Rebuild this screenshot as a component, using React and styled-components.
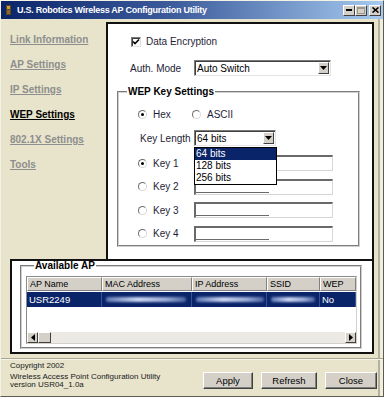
import React from 'react'
import styled, { createGlobalStyle, css } from 'styled-components'

const GlobalStyle = createGlobalStyle`
  html, body { margin: 0; padding: 0; background: #e7e4cb; }
  body { font-family: "Liberation Sans", Arial, sans-serif; }
  * { box-sizing: border-box; }
`

const NAV = ['Link Information', 'AP Settings', 'IP Settings', 'WEP Settings', '802.1X Settings', 'Tools']
const COLS = ['AP Name', 'MAC Address', 'IP Address', 'SSID', 'WEP']

export default function App() {
    return (
        <>
            <GlobalStyle />
            <Window>
                <TitleBar>
                    <AppIcon />
                    <TitleText>U.S. Robotics Wireless AP Configuration Utility</TitleText>
                    <CapButtons>
                        <CapButton><svg width="6" height="2"><rect width="6" height="2" fill="#000" /></svg></CapButton>
                        <CapButton $off>
                            <svg width="8" height="7"><rect x="0.5" y="0.5" width="7" height="6" fill="none" stroke="#9a978c" /><rect x="0" y="0" width="8" height="2" fill="#9a978c" /></svg>
                        </CapButton>
                        <CapButton $gap>
                            <svg width="7" height="6"><path d="M0.5 0.5 L6.5 5.5 M6.5 0.5 L0.5 5.5" stroke="#000" strokeWidth="1.6" /></svg>
                        </CapButton>
                    </CapButtons>
                </TitleBar>

                <TopRow>
                    <Nav>
                        {NAV.map((n) => (
                            <NavLink key={n} $active={n === 'WEP Settings'}>{n}</NavLink>
                        ))}
                    </Nav>
                    <Panel>
                        <CheckRow>
                            <CheckBox>
                                <svg width="8" height="8" viewBox="0 0 8 8"><path d="M1 3.5 L3 5.5 L7 1.5" fill="none" stroke="#000" strokeWidth="1.6" /></svg>
                            </CheckBox>
                            <span>Data Encryption</span>
                        </CheckRow>
                        <FieldRow $pl={22} $mt={12}>
                            <Label $w={64}>Auth. Mode</Label>
                            <Combo $w={137}>
                                Auto Switch
                                <ComboButton><Arrow /></ComboButton>
                            </Combo>
                        </FieldRow>

                        <Group $mt={10} $ml={9} $mr={12}>
                            <Legend>WEP Key Settings</Legend>
                            <GroupBody>
                                <OptionRow>
                                    <Option $w={54}><Radio $on /><span>Hex</span></Option>
                                    <Option><Radio /><span>ASCII</span></Option>
                                </OptionRow>
                                <FieldRow $pl={21} $mt={9}>
                                    <Label $w={54}>Key Length</Label>
                                    <Combo $w={82}>
                                        64 bits
                                        <ComboButton><Arrow /></ComboButton>
                                        <DropList>
                                            <DropItem $sel>64 bits</DropItem>
                                            <DropItem>128 bits</DropItem>
                                            <DropItem>256 bits</DropItem>
                                        </DropList>
                                    </Combo>
                                </FieldRow>
                                <KeyList>
                                    {[1, 2, 3, 4].map((k) => (
                                        <KeyRow key={k}>
                                            <Option $w={56}><Radio $on={k === 1} /><span>Key {k}</span></Option>
                                            <KeyInput />
                                        </KeyRow>
                                    ))}
                                </KeyList>
                            </GroupBody>
                        </Group>
                    </Panel>
                </TopRow>

                <APBox>
                    <APGroup>
                        <Legend $small>Available AP</Legend>
                        <ListView>
                            <GridRow>
                                {COLS.map((c) => <HeadCell key={c}>{c}</HeadCell>)}
                            </GridRow>
                            <GridRow $selected>
                                <DataCell>USR2249</DataCell>
                                <DataCell><Blur $w={80} /></DataCell>
                                <DataCell><Blur $w={68} /></DataCell>
                                <DataCell><Blur $w={44} /></DataCell>
                                <DataCell>No</DataCell>
                            </GridRow>
                            <ListSpace />
                            <HScroll>
                                <ScrollBtn><svg width="4" height="7"><path d="M4 0 L0 3.5 L4 7 Z" fill="#000" /></svg></ScrollBtn>
                                <ScrollThumb />
                                <ScrollTrack />
                                <ScrollBtn><svg width="4" height="7"><path d="M0 0 L4 3.5 L0 7 Z" fill="#000" /></svg></ScrollBtn>
                            </HScroll>
                        </ListView>
                    </APGroup>
                </APBox>

                <Footer>
                    <FooterText>
                        <FooterLine $first>Copyright 2002</FooterLine>
                        <FooterLine>Wireless Access Point Configuration Utility</FooterLine>
                        <FooterLine>version USR04_1.0a</FooterLine>
                    </FooterText>
                    <ButtonRow>
                        <Button $w={50}>Apply</Button>
                        <Button $w={56}>Refresh</Button>
                        <Button $w={52}>Close</Button>
                    </ButtonRow>
                </Footer>
            </Window>
        </>
    )
}

function AppIcon() {
    return (
        <svg width="9" height="12" viewBox="0 0 9 12" style={{ flex: 'none' }}>
            <rect x="2" y="1" width="5" height="10" fill="#5a4a1a" />
            <rect x="3" y="2" width="3" height="3" fill="#c8a040" />
            <rect x="3" y="6" width="3" height="4" fill="#8a6a28" />
        </svg>
    )
}

function Arrow() {
    return (
        <svg width="7" height="4"><path d="M0 0 L7 0 L3.5 4 Z" fill="#000" /></svg>
    )
}

const Window = styled.div`
    width: 384px;
    height: 397px;
    background: #e7e4cb;
    border: 1px solid;
    border-color: #f4f2e4 #5e5c50 #5e5c50 #f4f2e4;
    box-shadow: inset -3px 0 0 #f0eedd, inset -5px 0 0 #b4b19f;
    display: flex;
    flex-direction: column;
    overflow: hidden;
`

const TitleBar = styled.div`
    height: 18px;
    flex: none;
    display: flex;
    align-items: center;
    padding: 0 2px 0 3px;
    background: linear-gradient(to right, #0a246a, #3d5c9c 45%, #a6caf0);
`

const TitleText = styled.span`
    margin-left: 4px;
    color: #fff;
    font-weight: bold;
    font-size: 9px;
    letter-spacing: -0.25px;
    white-space: nowrap;
`

const CapButtons = styled.div`
    margin-left: auto;
    display: flex;
`

const CapButton = styled.span`
    width: 12px;
    height: 11px;
    display: flex;
    align-items: center;
    justify-content: center;
    background: #d4d0c8;
    border: 1px solid;
    border-color: #fff #404040 #404040 #fff;
    ${(p) => p.$gap && css`margin-left: 2px;`}
    ${(p) => p.$off && css`padding-bottom: 0;`}
`

const TopRow = styled.div`
    display: flex;
    margin-top: 3px;
    padding-right: 9px;
`

const Nav = styled.nav`
    width: 105px;
    flex: none;
    padding: 4.5px 0 0 9px;
`

const NavLink = styled.div`
    height: 25px;
    line-height: 25px;
    font-size: 10px;
    font-weight: bold;
    text-decoration: underline;
    color: ${(p) => (p.$active ? '#000' : '#8e8e8e')};
    white-space: nowrap;
`

const Panel = styled.div`
    flex: 1;
    height: 237px;
    background: #fff;
    border: 2px solid #111;
    border-bottom: none;
    display: flex;
    flex-direction: column;
    color: #1e1e36;
    font-size: 10px;
`

const CheckRow = styled.div`
    display: flex;
    align-items: center;
    height: 14px;
    margin-top: 11px;
    padding-left: 23px;
    gap: 5px;
`

const CheckBox = styled.span`
    width: 10px;
    height: 10px;
    flex: none;
    display: flex;
    align-items: center;
    justify-content: center;
    background: #fff;
    border: 1px solid;
    border-color: #7a7a7a #e0e0e0 #e0e0e0 #7a7a7a;
    box-shadow: inset 1px 1px 0 #3c3c3c;
`

const FieldRow = styled.div`
    display: flex;
    align-items: center;
    padding-left: ${(p) => p.$pl}px;
    margin-top: ${(p) => p.$mt}px;
`

const Label = styled.span`
    width: ${(p) => p.$w}px;
    flex: none;
    white-space: nowrap;
`

const Combo = styled.div`
    position: relative;
    width: ${(p) => p.$w}px;
    height: 16px;
    flex: none;
    display: flex;
    align-items: center;
    padding-left: 2px;
    background: #fff;
    border: 1px solid;
    border-color: #7a7a7a #e4e4e4 #e4e4e4 #7a7a7a;
    box-shadow: inset 1px 1px 0 #404040;
    color: #000;
    font-size: 10px;
`

const ComboButton = styled.span`
    margin-left: auto;
    width: 11px;
    height: 12px;
    margin-right: 1px;
    display: flex;
    align-items: center;
    justify-content: center;
    background: #d4d0c8;
    border: 1px solid;
    border-color: #fff #404040 #404040 #fff;
`

const DropList = styled.div`
    position: absolute;
    top: calc(100% + 2px);
    left: -1px;
    width: 83px;
    border: 1px solid #000;
    background: #fff;
    z-index: 2;
`

const DropItem = styled.div`
    height: 12px;
    line-height: 12px;
    padding-left: 1px;
    font-size: 10px;
    color: ${(p) => (p.$sel ? '#fff' : '#000')};
    background: ${(p) => (p.$sel ? '#0a246a' : 'transparent')};
`

const Group = styled.fieldset`
    margin: ${(p) => p.$mt}px ${(p) => p.$mr}px 12px ${(p) => p.$ml}px;
    padding: 0 0 3.5px 0;
    min-width: 0;
    border: 2px groove #d0d0d0;
`

const Legend = styled.legend`
    margin-left: 8px;
    padding: 0 1px;
    font-size: 10px;
    font-weight: bold;
    color: #000;
    line-height: ${(p) => (p.$small ? '10px' : '12px')};
`

const GroupBody = styled.div`
    display: flex;
    flex-direction: column;
`

const OptionRow = styled.div`
    display: flex;
    align-items: center;
    height: 14px;
    margin-top: 9px;
    padding-left: 19px;
`

const Option = styled.label`
    display: flex;
    align-items: center;
    gap: 6px;
    width: ${(p) => (p.$w ? `${p.$w}px` : 'auto')};
    flex: none;
    white-space: nowrap;
`

const Radio = styled.span`
    position: relative;
    width: 9px;
    height: 9px;
    flex: none;
    border-radius: 50%;
    border: 1px solid;
    border-color: #6e6e6e #d8d8d8 #d8d8d8 #6e6e6e;
    background: #fff;
    ${(p) => p.$on && css`
        &::after {
            content: '';
            position: absolute;
            left: 2px;
            top: 2px;
            width: 3px;
            height: 3px;
            border-radius: 50%;
            background: #000;
        }
    `}
`

const KeyList = styled.div`
    display: flex;
    flex-direction: column;
    gap: 7.5px;
    margin-top: 9px;
`

const KeyRow = styled.div`
    display: flex;
    align-items: center;
    height: 16px;
    padding-left: 19px;
`

const KeyInput = styled.div`
    position: relative;
    width: 139px;
    height: 16px;
    flex: none;
    background: #fff;
    border-style: solid;
    border-width: 2px 1px 1px 2px;
    border-color: #6a6a6a #d6d6d6 #d6d6d6 #6a6a6a;
    &::after {
        content: '';
        position: absolute;
        left: 0;
        bottom: 1px;
        width: 73px;
        height: 1px;
        background: #6a6a6a;
    }
`

const APBox = styled.div`
    margin: 0 9px;
    border: 2px solid #111;
    background: #fff;
    padding: 0 10px 3px 8px;
`

const APGroup = styled.fieldset`
    margin: 0;
    padding: 5px 0 3px 4px;
    min-width: 0;
    border: 2px groove #d0d0d0;
`

const ListView = styled.div`
    width: 331px;
    height: 68px;
    display: flex;
    flex-direction: column;
    border: 1px solid;
    border-color: #8a8a8a #d4d0c8 #d4d0c8 #8a8a8a;
    background: #fff;
`

const GridRow = styled.div`
    display: grid;
    grid-template-columns: 75px 90px 75px 53px 1fr;
    height: ${(p) => (p.$selected ? '15px' : '14px')};
    background: ${(p) => (p.$selected ? '#0a246a' : 'transparent')};
    margin-top: ${(p) => (p.$selected ? '1px' : '0')};
`

const HeadCell = styled.div`
    background: #d4d0c8;
    border: 1px solid;
    border-color: #fff #808080 #808080 #fff;
    padding-left: 2px;
    font-size: 9px;
    line-height: 12px;
    color: #000;
    white-space: nowrap;
    overflow: hidden;
`

const DataCell = styled.div`
    padding-left: 2px;
    font-size: 9.5px;
    line-height: 15px;
    color: #fff;
    border-right: 1px solid #3a5290;
    overflow: hidden;
`

const Blur = styled.span`
    display: block;
    width: ${(p) => p.$w}px;
    height: 5px;
    margin: 5px 0 0 2px;
    border-radius: 2px;
    background: linear-gradient(90deg, rgba(150, 175, 225, 0.6), rgba(215, 225, 250, 0.95) 40%, rgba(190, 205, 240, 0.8) 75%, rgba(140, 165, 215, 0.5));
    filter: blur(1px);
`

const ListSpace = styled.div`
    flex: 1;
`

const HScroll = styled.div`
    height: 11px;
    display: flex;
    background: #ebe9e4;
`

const ScrollBtn = styled.span`
    width: 11px;
    height: 11px;
    flex: none;
    display: flex;
    align-items: center;
    justify-content: center;
    background: #d4d0c8;
    border: 1px solid;
    border-color: #fff #404040 #404040 #fff;
`

const ScrollThumb = styled(ScrollBtn)`
    width: 13px;
`

const ScrollTrack = styled.span`
    flex: 1;
`

const Footer = styled.div`
    margin-top: 4px;
    flex: 1;
    display: flex;
    padding: 2px 6px 0 9px;
    border-top: 1px solid #a9a692;
    box-shadow: inset 0 1px 0 #f6f4e8;
    color: #202020;
`

const FooterText = styled.div`
    display: flex;
    flex-direction: column;
    font-size: 8px;
`

const FooterLine = styled.div`
    line-height: ${(p) => (p.$first ? '9px' : '8.5px')};
    margin-bottom: ${(p) => (p.$first ? '2.5px' : '0')};
    white-space: nowrap;
`

const ButtonRow = styled.div`
    margin-left: auto;
    margin-top: 11px;
    display: flex;
    gap: 8px;
`

const Button = styled.button`
    width: ${(p) => p.$w}px;
    height: 17px;
    padding: 0;
    background: #d4d0c8;
    border: 1px solid;
    border-color: #fff #404040 #404040 #fff;
    box-shadow: inset -1px -1px 0 #808080;
    font-family: "Liberation Sans", Arial, sans-serif;
    font-size: 9.5px;
    color: #000;
`
